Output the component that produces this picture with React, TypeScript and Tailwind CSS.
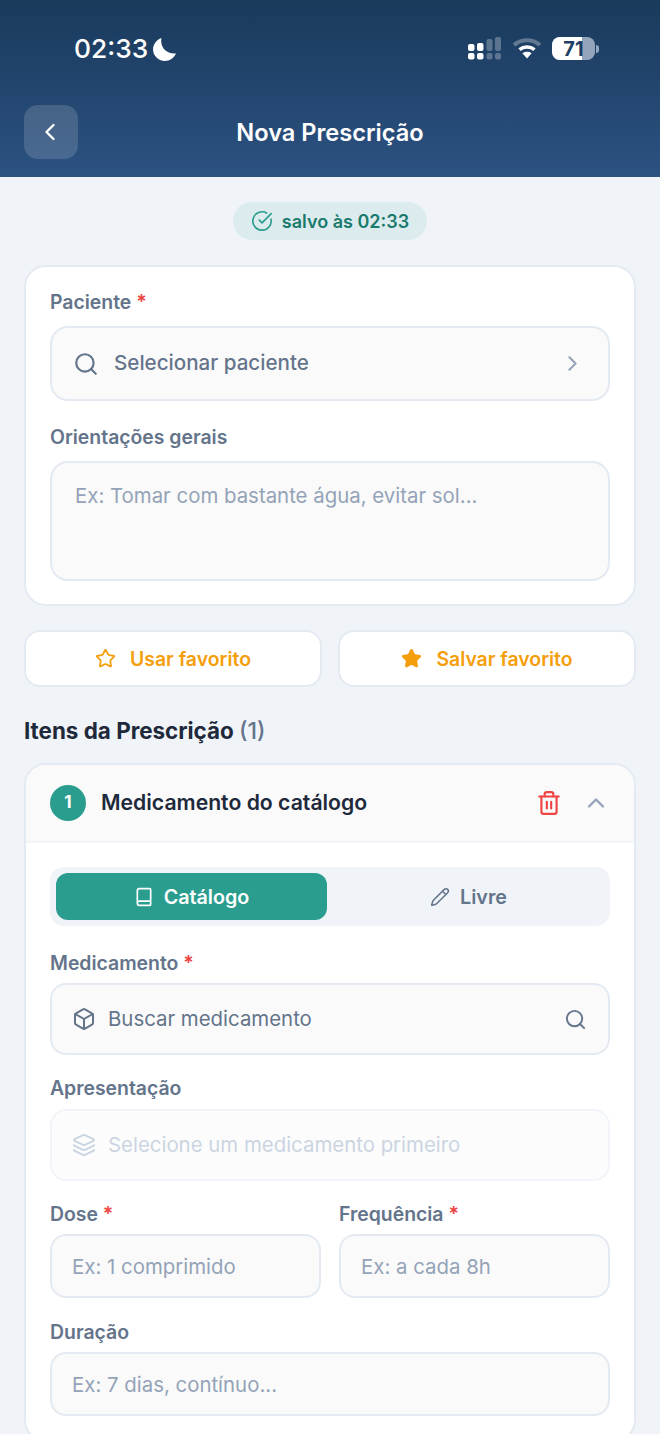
import { Book, Box, ChevronLeft, ChevronRight, ChevronUp, CircleCheckBig, Layers, Pencil, Search, Star, Trash2 } from "lucide-react";
import type { ReactNode } from "react";

const fieldBorder = "border-2 border-[#e4eaf2] bg-[#fafafa]";

const Label = ({ children, required }: { children: ReactNode; required?: boolean }) => (
  <div className="text-[19.4px] leading-[24px] font-semibold text-[#64748b] -translate-y-[1px]">
    {children}
    {required && <span className="text-[#ef4444]"> *</span>}
  </div>
);

const TextField = ({ placeholder }: { placeholder: string }) => (
  <div className={`h-[64px] mt-[7px] rounded-[16px] ${fieldBorder} flex items-center pt-[2px] px-[20px] text-[20.4px] text-[#94a3b8]`}>
    {placeholder}
  </div>
);

// status bar bits
const Signal = () => (
  <svg width="34" height="23" viewBox="0 0 34 23" className="block">
    <rect x="0" y="7" width="6.5" height="7" rx="2" fill="#fff" />
    <rect x="0" y="16" width="6.5" height="6.5" rx="2" fill="#fff" />
    <rect x="9" y="6" width="6.5" height="8" rx="2" fill="#fff" />
    <rect x="9" y="16" width="6.5" height="6.5" rx="2" fill="#fff" />
    <rect x="18.5" y="2" width="6" height="12" rx="2" fill="#fff" opacity="0.28" />
    <rect x="18.5" y="16" width="6" height="6.5" rx="2" fill="#fff" opacity="0.28" />
    <rect x="27" y="0" width="6" height="14" rx="2" fill="#fff" opacity="0.28" />
    <rect x="27" y="16" width="6" height="6.5" rx="2" fill="#fff" opacity="0.28" />
  </svg>
);

const Wifi = () => (
  <svg width="28" height="21" viewBox="0 0 28 21" className="block">
    <path d="M1 7C8.4 0.6 19.6 0.6 27 7" fill="none" stroke="#fff" strokeOpacity="0.3" strokeWidth="4" />
    <path d="M6.5 11.6C10.8 8.2 17.2 8.2 21.5 11.6" fill="none" stroke="#fff" strokeWidth="3.6" />
    <path d="M14 20.5L9.4 15.2C12.2 13.3 15.8 13.3 18.6 15.2Z" fill="#fff" />
  </svg>
);

const Battery = () => (
  <div className="flex items-center gap-[1px]">
    <div className="relative w-[43px] h-[23px] rounded-[8px] bg-[#94a5bb] overflow-hidden">
      <div className="absolute left-0 top-0 bottom-0 w-[30px] bg-white" />
      <div className="absolute inset-0 flex items-center justify-center text-[20px] font-bold text-[#1d3f66] leading-none">71</div>
    </div>
    <div className="w-[3px] h-[8px] rounded-r-full bg-[#94a5bb]" />
  </div>
);

export default function App() {
  return (
    <div
      className="w-[660px] h-[1434px] overflow-hidden bg-[#f0f4f8] flex flex-col"
      style={{ fontFamily: "Inter, 'Noto Sans', sans-serif" }}
    >
      {/* Header */}
      <header className="h-[177px] shrink-0 bg-gradient-to-b from-[#1a3a5c] to-[#2c5282] flex flex-col">
        <div className="h-[105px] flex justify-between pl-[74px] pr-[61px] pt-[31px]">
          <div className="flex items-start gap-[4px] text-white">
            <span className="text-[26.3px] leading-[36px] font-medium">02:33</span>
            <svg width="25" height="25" viewBox="0 0 24 24" className="mt-[6px]" fill="#fff">
              <path d="M9 1C7.6 9.5 13 16.4 23 15.8 21 20.4 16.6 23 12.3 23 6.2 23 1 18 1 12 1 7 4.4 2.6 9 1Z" />
            </svg>
          </div>
          <div className="flex items-start gap-[11px] pt-[6px]">
            <Signal />
            <div className="mt-[1px]"><Wifi /></div>
            <Battery />
          </div>
        </div>
        <div className="relative flex items-start justify-center">
          <div className="absolute left-[24px] top-0 w-[54px] h-[54px] rounded-[14px] bg-white/15 flex items-center justify-center">
            <ChevronLeft className="w-[28px] h-[28px] text-white -ml-[2px]" strokeWidth={2} />
          </div>
          <h1 className="text-[23.6px] leading-[54px] pt-[1px] font-semibold text-white">Nova Prescrição</h1>
        </div>
      </header>

      <main className="px-[24px] pt-[25px] flex flex-col">
        {/* Saved pill */}
        <div className="self-center h-[38px] px-[18px] rounded-full bg-[#dcecee] flex items-center gap-[9px]">
          <CircleCheckBig className="w-[22px] h-[22px] text-[#2a9d8f]" strokeWidth={1.8} />
          <span className="text-[18px] font-semibold text-[#1a7a6d]">salvo às 02:33</span>
        </div>

        {/* Patient card */}
        <section className="mt-[25px] h-[341px] rounded-[22px] border-2 border-[#e4eaf2] bg-white px-[24px] pt-[24px]">
          <Label required>Paciente</Label>
          <div className={`mt-[11px] h-[75px] rounded-[18px] ${fieldBorder} flex items-center pl-[21px] pr-[23px]`}>
            <Search className="w-[26px] h-[26px] text-[#64748b]" strokeWidth={2} />
            <span className="ml-[15px] text-[20.6px] font-medium text-[#64748b] flex-1">Selecionar paciente</span>
            <ChevronRight className="w-[25px] h-[25px] text-[#94a3b8]" strokeWidth={2} />
          </div>
          <div className="mt-[25px]"><Label>Orientações gerais</Label></div>
          <div className={`mt-[11px] h-[120px] rounded-[18px] ${fieldBorder} px-[23px] pt-[19px] text-[20.4px] leading-[28px] text-[#94a3b8]`}>
            Ex: Tomar com bastante água, evitar sol...
          </div>
        </section>

        {/* Favorites */}
        <div className="mt-[24px] grid grid-cols-2 gap-[16px]">
          <button className="h-[57px] pt-[2px] rounded-[16px] border-2 border-[#e4eaf2] bg-white flex items-center justify-center gap-[14px] text-[19.4px] font-semibold text-[#f59e0b]">
            <Star className="w-[21px] h-[21px] -mt-[2px]" strokeWidth={2} />
            Usar favorito
          </button>
          <button className="h-[57px] pt-[2px] rounded-[16px] border-2 border-[#e4eaf2] bg-white flex items-center justify-center gap-[14px] text-[19.4px] font-semibold text-[#f59e0b]">
            <Star className="w-[21px] h-[21px] -mt-[2px] fill-[#f59e0b]" strokeWidth={2} />
            Salvar favorito
          </button>
        </div>

        <h2 className="mt-[29px] text-[22.4px] leading-[30px] font-bold text-[#1e293b]">
          Itens da Prescrição <span className="font-medium text-[23px] text-[#64748b]">(1)</span>
        </h2>

        {/* Item card */}
        <section className="mt-[17px] rounded-[22px] border-2 border-[#e4eaf2] bg-white overflow-hidden">
          <div className="h-[78px] bg-[#fafafa] border-b-2 border-[#f1f5f9] flex items-center pl-[24px] pr-[24px]">
            <div className="w-[36px] h-[36px] rounded-full bg-[#2a9d8f] flex items-center justify-center text-white text-[17px] font-bold">1</div>
            <span className="ml-[15px] flex-1 text-[21.2px] font-semibold text-[#1e293b]">Medicamento do catálogo</span>
            <Trash2 className="w-[26px] h-[26px] text-[#ef4444]" strokeWidth={2} />
            <ChevronUp className="ml-[20px] w-[28px] h-[28px] text-[#94a3b8]" strokeWidth={2} />
          </div>
          <div className="px-[24px] pt-[24px] pb-[24px]">
            <div className="h-[59px] rounded-[14px] bg-[#f0f4f8] p-[6px] grid grid-cols-2 gap-[6px]">
              <div className="rounded-[12px] bg-[#2a9d8f] flex items-center justify-center gap-[10px] text-white text-[19.7px] font-semibold">
                <Book className="w-[20px] h-[20px]" strokeWidth={2} />
                <span className="pt-[2px]">Catálogo</span>
              </div>
              <div className="flex items-center justify-center gap-[10px] text-[#64748b] text-[19.7px] font-semibold">
                <Pencil className="w-[20px] h-[20px]" strokeWidth={1.8} />
                <span className="pt-[2px]">Livre</span>
              </div>
            </div>

            <div className="mt-[26px]"><Label required>Medicamento</Label></div>
            <div className={`mt-[7px] h-[72px] rounded-[16px] ${fieldBorder} flex items-center pl-[20px] pr-[21px]`}>
              <Box className="w-[24px] h-[24px] text-[#64748b]" strokeWidth={2} />
              <span className="ml-[12px] flex-1 text-[20.4px] text-[#64748b] pt-[1px]">Buscar medicamento</span>
              <Search className="w-[23px] h-[23px] text-[#64748b]" strokeWidth={2} />
            </div>

            <div className="mt-[22px]"><Label>Apresentação</Label></div>
            <div className="mt-[8px] h-[72px] rounded-[16px] border-2 border-[#f1f5f9] bg-[#fcfcfd] flex items-center px-[20px] text-[#cbd5e1]">
              <Layers className="w-[24px] h-[24px]" strokeWidth={2} />
              <span className="ml-[12px] text-[20.4px] pt-[1px]">Selecione um medicamento primeiro</span>
            </div>

            <div className="mt-[22px] grid grid-cols-2 gap-[18px]">
              <div>
                <Label required>Dose</Label>
                <TextField placeholder="Ex: 1 comprimido" />
              </div>
              <div>
                <Label required>Frequência</Label>
                <TextField placeholder="Ex: a cada 8h" />
              </div>
            </div>

            <div className="mt-[23px]"><Label>Duração</Label></div>
            <TextField placeholder="Ex: 7 dias, contínuo..." />
          </div>
        </section>
      </main>
    </div>
  );
}
